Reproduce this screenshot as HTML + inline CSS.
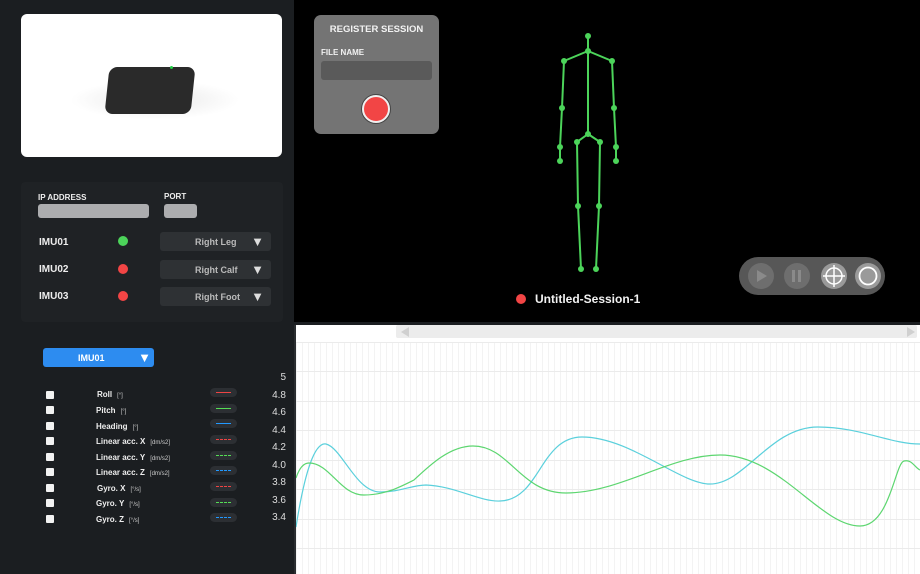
<!DOCTYPE html>
<html><head><meta charset="utf-8"><style>
*{margin:0;padding:0;box-sizing:border-box}
body{width:920px;height:574px;overflow:hidden;background:#000;font-family:"Liberation Sans",sans-serif;position:relative}
.abs{position:absolute}
.left{left:0;top:0;width:294px;height:574px;background:#1b1e21}
.b{font-weight:bold}
.lbl{color:#eee;font-size:8px;font-weight:bold;position:absolute;white-space:nowrap}
.lbl small{font-size:6px;font-weight:normal;color:#ccc;margin-left:5px}
.cb{position:absolute;left:46px;width:8px;height:8px;background:#f2f2f2;border-radius:1px}
.pill{position:absolute;left:210px;width:27px;height:9px;border-radius:5px;background:#2c2f33}
.pill i{position:absolute;left:6px;right:6px;top:4px;height:0;border-top:1px solid}
.ax{position:absolute;right:634px;font-size:10px;color:#ddd}
.sel{position:absolute;left:160px;width:111px;height:19px;border-radius:3px;background:#2e3134;color:#bbb;font-size:9px;font-weight:bold}
.sel span{position:absolute;left:35px;top:5px}
.sel b{position:absolute;right:7px;top:2px;font-size:13px;color:#ddd}
</style></head><body>
<div class="abs left"></div>
<div class="abs" style="left:21px;top:14px;width:261px;height:143px;background:#fff;border-radius:6px"></div>
<div class="abs" style="left:70px;top:80px;width:170px;height:40px;border-radius:50%;background:radial-gradient(#e8e8e8,#fff 70%)"></div>
<div class="abs" style="left:107px;top:67px;width:86px;height:47px;background:#2a2a2a;border-radius:8px;transform:skewX(-6deg)"></div>
<div class="abs" style="left:170px;top:66px;width:3px;height:3px;background:#2c4;border-radius:50%"></div>

<div class="abs" style="left:21px;top:182px;width:262px;height:140px;background:#1f2225;border-radius:4px"></div>
<div class="lbl" style="left:38px;top:193px">IP ADDRESS</div>
<div class="lbl" style="left:164px;top:192px">PORT</div>
<div class="abs" style="left:38px;top:204px;width:111px;height:14px;background:#acadaf;border-radius:3px"></div>
<div class="abs" style="left:164px;top:204px;width:33px;height:14px;background:#acadaf;border-radius:3px"></div>
<div class="abs b" style="left:39px;top:237px;color:#eee;font-size:10px">IMU01</div>
<div class="abs b" style="left:39px;top:264px;color:#eee;font-size:10px">IMU02</div>
<div class="abs b" style="left:39px;top:291px;color:#eee;font-size:10px">IMU03</div>
<div class="abs" style="left:118px;top:236px;width:10px;height:10px;border-radius:50%;background:#4cd45a"></div>
<div class="abs" style="left:118px;top:264px;width:10px;height:10px;border-radius:50%;background:#f24545"></div>
<div class="abs" style="left:118px;top:291px;width:10px;height:10px;border-radius:50%;background:#f24545"></div>
<div class="sel" style="top:232px"><span>Right Leg</span><b>▼</b></div>
<div class="sel" style="top:260px"><span>Right Calf</span><b>▼</b></div>
<div class="sel" style="top:287px"><span>Right Foot</span><b>▼</b></div>

<div class="abs b" style="left:43px;top:348px;width:111px;height:19px;background:#2d8cf0;border-radius:3px;color:#fff;font-size:9px"><span style="position:absolute;left:35px;top:5px">IMU01</span><span style="position:absolute;right:3px;top:2px;font-size:13px">▼</span></div>

<div class="cb" style="top:391px"></div><div class="cb" style="top:406px"></div><div class="cb" style="top:422px"></div><div class="cb" style="top:437px"></div><div class="cb" style="top:453px"></div><div class="cb" style="top:468px"></div><div class="cb" style="top:484px"></div><div class="cb" style="top:499px"></div><div class="cb" style="top:515px"></div>
<div class="lbl" style="left:97px;top:390px">Roll<small>[°]</small></div>
<div class="lbl" style="left:96px;top:406px">Pitch<small>[°]</small></div>
<div class="lbl" style="left:96px;top:422px">Heading<small>[°]</small></div>
<div class="lbl" style="left:96px;top:437px">Linear acc. X<small>[dm/s2]</small></div>
<div class="lbl" style="left:96px;top:453px">Linear acc. Y<small>[dm/s2]</small></div>
<div class="lbl" style="left:96px;top:468px">Linear acc. Z<small>[dm/s2]</small></div>
<div class="lbl" style="left:97px;top:484px">Gyro. X<small>[°/s]</small></div>
<div class="lbl" style="left:96px;top:499px">Gyro. Y<small>[°/s]</small></div>
<div class="lbl" style="left:96px;top:515px">Gyro. Z<small>[°/s]</small></div>
<div class="pill" style="top:388px"><i style="border-color:#e44"></i></div>
<div class="pill" style="top:404px"><i style="border-color:#5d5"></i></div>
<div class="pill" style="top:419px"><i style="border-color:#29f"></i></div>
<div class="pill" style="top:435px"><i style="border-color:#e44;border-top-style:dashed"></i></div>
<div class="pill" style="top:451px"><i style="border-color:#5d5;border-top-style:dashed"></i></div>
<div class="pill" style="top:466px"><i style="border-color:#29f;border-top-style:dashed"></i></div>
<div class="pill" style="top:482px"><i style="border-color:#e44;border-top-style:dashed"></i></div>
<div class="pill" style="top:498px"><i style="border-color:#5d5;border-top-style:dashed"></i></div>
<div class="pill" style="top:513px"><i style="border-color:#29f;border-top-style:dashed"></i></div>
<div class="ax" style="top:372px">5</div>
<div class="ax" style="top:390px">4.8</div>
<div class="ax" style="top:407px">4.6</div>
<div class="ax" style="top:425px">4.4</div>
<div class="ax" style="top:442px">4.2</div>
<div class="ax" style="top:460px">4.0</div>
<div class="ax" style="top:477px">3.8</div>
<div class="ax" style="top:495px">3.6</div>
<div class="ax" style="top:512px">3.4</div>

<div class="abs" style="left:314px;top:15px;width:125px;height:119px;background:#747474;border-radius:7px"></div>
<div class="abs b" style="left:314px;top:24px;width:125px;text-align:center;color:#f2f2f2;font-size:9.5px">REGISTER SESSION</div>
<div class="abs b" style="left:321px;top:48px;color:#f2f2f2;font-size:8px">FILE NAME</div>
<div class="abs" style="left:321px;top:61px;width:111px;height:19px;background:#5a5a5a;border-radius:3px"></div>
<div class="abs" style="left:362px;top:95px;width:28px;height:28px;border-radius:50%;background:#f24545;border:2px solid #f0f0f0;box-shadow:0 0 0 1px #444"></div>

<svg class="abs" style="left:0;top:0" width="920" height="323">
<g stroke="#4cd45a" stroke-width="2" fill="none">
<path d="M588,36 L588,51 L564,61 L562,108 L560,147 L560,161 M588,51 L612,61 L614,108 L616,147 L616,161 M588,51 L588,134 L577,142 L578,206 L581,269 M588,134 L600,142 L599,206 L596,269"/>
</g>
<g fill="#4cd45a">
<circle cx="588" cy="36" r="3"/><circle cx="588" cy="51" r="3"/><circle cx="564" cy="61" r="3"/><circle cx="612" cy="61" r="3"/><circle cx="562" cy="108" r="3"/><circle cx="614" cy="108" r="3"/><circle cx="560" cy="147" r="3"/><circle cx="616" cy="147" r="3"/><circle cx="560" cy="161" r="3"/><circle cx="616" cy="161" r="3"/><circle cx="588" cy="134" r="3"/><circle cx="577" cy="142" r="3"/><circle cx="600" cy="142" r="3"/><circle cx="578" cy="206" r="3"/><circle cx="599" cy="206" r="3"/><circle cx="581" cy="269" r="3"/><circle cx="596" cy="269" r="3"/>
</g>
<circle cx="521" cy="299" r="5" fill="#f24545"/>
<text x="535" y="303" fill="#f2f2f2" font-size="12" font-weight="bold" font-family="Liberation Sans">Untitled-Session-1</text>
<rect x="739" y="257" width="146" height="38" rx="19" fill="#575757"/>
<circle cx="761" cy="276" r="13" fill="#6e6e6e"/><path d="M757,270 L767,276 L757,282Z" fill="#8a8a8a"/>
<circle cx="797" cy="276" r="13" fill="#6e6e6e"/><rect x="792" y="270" width="3" height="12" fill="#8a8a8a"/><rect x="798" y="270" width="3" height="12" fill="#8a8a8a"/>
<circle cx="834" cy="276" r="13" fill="#9a9a9a"/><circle cx="834" cy="276" r="8" fill="none" stroke="#fff" stroke-width="1.5"/><path d="M823,276 H845 M834,265 V287" stroke="#fff" stroke-width="1.5"/>
<circle cx="868" cy="276" r="13" fill="#9a9a9a"/><circle cx="868" cy="276" r="8.5" fill="none" stroke="#fff" stroke-width="1.8"/>
</svg>

<div class="abs" style="left:294px;top:322px;width:626px;height:3px;background:#1b1e21"></div>
<div class="abs" style="left:294px;top:325px;width:3px;height:249px;background:#2a2d30"></div>
<svg class="abs" style="left:296px;top:325px" width="624" height="249">
<defs><pattern id="v" width="6" height="249" patternUnits="userSpaceOnUse"><line x1="0.5" y1="0" x2="0.5" y2="249" stroke="#f3f3f3"/></pattern></defs>
<rect width="624" height="249" fill="#fff"/>
<rect x="0" y="17" width="624" height="232" fill="url(#v)"/>
<rect x="100" y="0" width="521" height="13" rx="2" fill="#ececec"/>
<path d="M105,7 L113,2 L113,12Z" fill="#d0d0d0"/><path d="M619,7 L611,2 L611,12Z" fill="#d0d0d0"/>
<g stroke="#ebebeb" stroke-width="1">
<path d="M0,17.5H624M0,46.5H624M0,76.5H624M0,105.5H624M0,135.5H624M0,164.5H624M0,194.5H624M0,223.5H624"/>
</g>
<g transform="translate(-296,-325)" fill="none" stroke-width="1.2">
<path stroke="#5bd0dc" d="M296,527 C305,470 315,442 326,444 C342,448 356,492 380,492 C400,492 412,485 426,485 C455,486 480,502 500,501 C540,500 540,437 582,437 C630,437 680,484 710,484 C745,484 770,427 818,427 C860,427 890,444 920,444"/>
<path stroke="#5dd670" d="M296,478 C300,466 305,463 309,463 C330,463 340,495 364,495 C385,495 400,487 414,480 C430,465 450,446 473,446 C510,446 520,493 566,493 C620,493 670,455 720,455 C780,455 820,526 860,526 C890,526 895,463 904,461 C912,459 915,468 920,470"/>
</g>
</svg>
</body></html>
